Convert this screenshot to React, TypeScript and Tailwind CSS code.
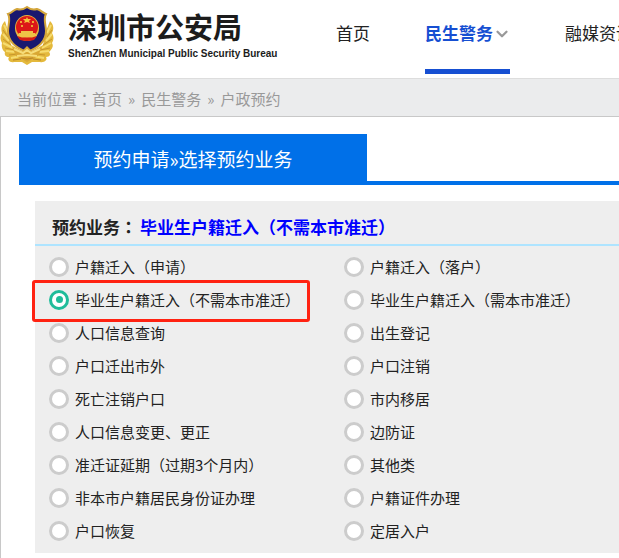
import { useState } from 'react';
import { ChevronDown } from 'lucide-react';

const services = [
  '户籍迁入（申请）',
  '户籍迁入（落户）',
  '毕业生户籍迁入（不需本市准迁）',
  '毕业生户籍迁入（需本市准迁）',
  '人口信息查询',
  '出生登记',
  '户口迁出市外',
  '户口注销',
  '死亡注销户口',
  '市内移居',
  '人口信息变更、更正',
  '边防证',
  '准迁证延期（过期3个月内）',
  '其他类',
  '非本市户籍居民身份证办理',
  '户籍证件办理',
  '户口恢复',
  '定居入户',
];

const HIGHLIGHTED = '毕业生户籍迁入（不需本市准迁）';

function Emblem() {
  return (
    <svg viewBox="0 0 56 62" className="h-[62px] w-14 shrink-0" aria-hidden="true">
      {/* wheat ears */}
      <path d="M5 16 C1 20 1 24 2 28 C0 31 0 35 2 38 C1 42 3 46 5 47 C4 50 6 52 9 52 C7 55 10 58 14 57 L22 57 L27 60 L32 57 L40 57 C44 58 48 55 46 52 C50 52 51 49 49 47 C52 44 54 41 52 38 C54 35 54 31 52 28 C54 24 54 20 50 16 L46 26 L43 40 L27 49 L11 40 L8 26 Z" fill="#e4b93c" />
      <path d="M4 20 L8 28 M3 29 L9 36 M3 38 L13 43 M6 46 L16 47 M11 53 L21 51 M51 20 L47 28 M52 29 L46 36 M51 38 L42 43 M49 46 L39 47 M44 53 L33 51" stroke="#f6dc70" strokeWidth="2" fill="none" />
      <path d="M3 25 L8 32 M3 34 L11 40 M5 43 L15 45 M9 50 L18 49 M52 25 L47 32 M52 34 L43 40 M50 43 L40 45 M45 50 L36 49" stroke="#c8962c" strokeWidth="1" fill="none" />
      {/* shield */}
      <path d="M27 2 C23 5 20 5 17 4 C13 5 12 8 8 9 C11 14 8 20 8 26 C8 36 16 43 27 47 C38 43 46 36 46 26 C46 20 43 14 46 9 C43 8 41 5 37 4 C34 5 31 5 27 2 Z" fill="#18186f" stroke="#d3a53a" strokeWidth="2" />
      <ellipse cx="27" cy="23" rx="12" ry="13" fill="#e6b73f" />
      <ellipse cx="27" cy="22" rx="11" ry="11" fill="#dc1818" />
      <path d="M27 12 L28 14 L31 14 L29 16 L30 18 L27 17 L24 18 L25 16 L23 14 L26 14 Z" fill="#f4c43d" />
      <path d="M20 16h2v2h-2z M32 16h2v2h-2z M21 20h2v2h-2z M31 20h2v2h-2z" fill="#f0a638" />
      <path d="M19 28 H21 V26 H33 V28 H35 L37 31 Q27 34 17 31 Z" fill="#efc346" />
      <path d="M17 31 Q27 35 37 31 L34 35 Q27 37 20 35 Z" fill="#d51d16" />
      {/* gate and ribbon */}
      <path d="M12 42 L22 46 L27 41 L32 46 L42 42 L38 51 L27 57 L16 51 Z" fill="#d9a733" />
      <path d="M14 44 L23 48 L27 45 L31 48 L40 44 M17 51 L27 50 L37 51" stroke="#f6dc78" strokeWidth="2" fill="none" />
      <path d="M21 53 L27 54 L33 53 M13 55 L21 54 M41 55 L33 54" stroke="#b98326" strokeWidth="1" fill="none" />
    </svg>
  );
}

function Header() {
  return (
    <header className="flex h-[79px] items-start overflow-hidden border-b border-[#dddddd] bg-white">
      <a href="#" className="flex w-[336px] shrink-0 pt-[5px]">
        <Emblem />
        <span className="flex flex-col pt-1 pl-3 text-[#1c1c1c]">
          <span className="text-[29px] leading-[34px] font-bold whitespace-nowrap">深圳市公安局</span>
          <span className="pt-1 font-['Liberation_Sans',sans-serif] text-[10px] leading-[14px] font-bold whitespace-nowrap">
            ShenZhen Municipal Public Security Bureau
          </span>
        </span>
      </a>
      <nav className="flex shrink-0 gap-[55px] text-[17px] leading-[66px] whitespace-nowrap text-[#222222]">
        <a href="#" className="h-[74px]">首页</a>
        <a href="#" className="flex h-[74px] w-[85px] border-b-[5px] border-[#164fd2] font-bold text-[#164fd2]">
          民生警务
          <ChevronDown className="mt-[25px] size-[18px] shrink-0 text-[#999999]" strokeWidth={3} />
        </a>
        <a href="#" className="h-[74px]">融媒资讯</a>
      </nav>
    </header>
  );
}

export default function App() {
  const [selected, setSelected] = useState(HIGHLIGHTED);

  return (
    <div className="overflow-hidden bg-white font-['Noto_Sans_CJK_SC',sans-serif] text-[#222222]">
      <Header />

      <div className="flex h-[37px] items-center gap-[6px] bg-[#ebeced] pt-[2px] pl-[17px] text-[15px] leading-5 whitespace-nowrap text-[#999999]">
        <span>
          当前位置<span className="font-['Noto_Sans_CJK_TC',sans-serif]">：</span>
          <a href="#">首页</a>
        </span>
        <span>»</span>
        <a href="#">民生警务</a>
        <span>»</span>
        <a href="#">户政预约</a>
      </div>

      <main className="border-t border-l border-[#c8c8c8] pt-[17px] pb-[5px]">
        <div className="ml-[18px] border-b-4 border-[#0070e8]">
          <h1 className="h-[47px] w-[348px] bg-[#0070e8] text-center text-[19px] leading-[50px] text-white">
            预约申请»选择预约业务
          </h1>
        </div>

        <section className="mt-4 ml-[34px] bg-[#eeeeee] pb-[6px]">
          <h2 className="border-b-2 border-[#aee4ff] pt-3 pb-1 pl-[17px] text-[17px] leading-[27px] font-bold whitespace-nowrap">
            预约业务<span className="font-['Noto_Sans_CJK_TC',sans-serif]">：</span>
            <span className="ml-[3px] text-[#0000ff]">{selected}</span>
          </h2>
          <div className="grid grid-cols-[295px_1fr] pt-1 pl-[14px]">
            {services.map((name) => (
              <label key={name} className="relative flex h-[33px] items-center gap-[6px] text-[15px] whitespace-nowrap">
                <input
                  type="radio"
                  name="service"
                  checked={selected === name}
                  onChange={() => setSelected(name)}
                  className="grid size-5 shrink-0 appearance-none place-items-center rounded-full border-3 border-[#cccccc] bg-white checked:border-[#1fbc9a] checked:before:size-[7px] checked:before:rounded-full checked:before:bg-[#1fbc9a]"
                />
                <span className="leading-5">{name}</span>
                {name === HIGHLIGHTED && (
                  <span className="pointer-events-none absolute -top-[3px] -bottom-[6px] -left-[17px] w-[278px] rounded-[3px] border-3 border-[#ff2211]" />
                )}
              </label>
            ))}
          </div>
        </section>
      </main>
    </div>
  );
}
